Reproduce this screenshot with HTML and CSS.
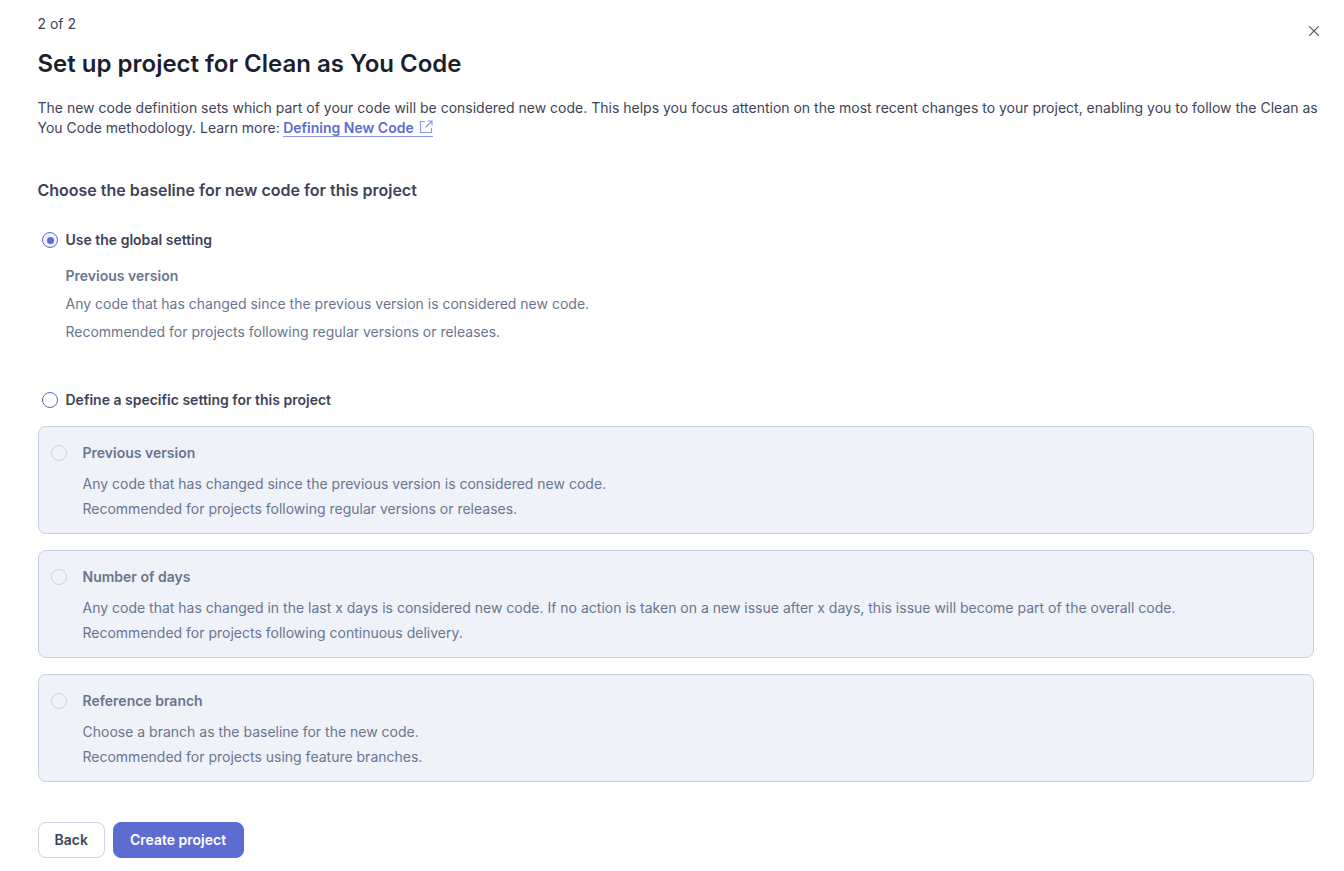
FILE: index.html
```html
<!DOCTYPE html>
<html lang="en">
<head>
<meta charset="utf-8">
<title>Set up project</title>
<link rel="stylesheet" href="styles.css">
</head>
<body>
<div class="page">
  <div class="top">
    <div class="step">2 of 2</div>
    <button class="close" aria-label="Close">
      <svg width="16" height="16" viewBox="0 0 16 16"><path d="M3.3 3.3 12.7 12.7M12.7 3.3 3.3 12.7" stroke="#4e5266" stroke-width="1.2" fill="none"/></svg>
    </button>
  </div>
  <h1 class="title">Set up project for Clean as You Code</h1>
  <p class="intro">The new code definition sets which part of your code will be considered new code. This helps you focus attention on the most recent changes to your project, enabling you to follow the Clean as You Code methodology. Learn more: <a class="link" href="#">Defining New Code<svg class="ext" width="14" height="14" viewBox="0 0 14 14"><path d="M6 1.5H1.5V12.5H12.5V8M8.5 1H13V5.5M13 1 6.5 7.5" stroke="#8d9be8" stroke-width="1.2" fill="none"/></svg></a></p>
  <h2 class="subtitle">Choose the baseline for new code for this project</h2>

  <div class="option-row first"><span class="radio checked"></span><span class="option-label">Use the global setting</span></div>
  <div class="global">
    <div class="global-title">Previous version</div>
    <div class="global-line">Any code that has changed since the previous version is considered new code.</div>
    <div class="global-line">Recommended for projects following regular versions or releases.</div>
  </div>

  <div class="option-row second"><span class="radio"></span><span class="option-label">Define a specific setting for this project</span></div>

  <div class="cards">
    <div class="card">
      <div class="card-head"><span class="radio disabled"></span><span class="card-title">Previous version</span></div>
      <div class="card-line">Any code that has changed since the previous version is considered new code.</div>
      <div class="card-line">Recommended for projects following regular versions or releases.</div>
    </div>
    <div class="card">
      <div class="card-head"><span class="radio disabled"></span><span class="card-title">Number of days</span></div>
      <div class="card-line">Any code that has changed in the last x days is considered new code. If no action is taken on a new issue after x days, this issue will become part of the overall code.</div>
      <div class="card-line">Recommended for projects following continuous delivery.</div>
    </div>
    <div class="card">
      <div class="card-head"><span class="radio disabled"></span><span class="card-title">Reference branch</span></div>
      <div class="card-line">Choose a branch as the baseline for the new code.</div>
      <div class="card-line">Recommended for projects using feature branches.</div>
    </div>
  </div>

  <div class="actions">
    <button class="btn btn-back">Back</button>
    <button class="btn btn-primary">Create project</button>
  </div>
</div>
</body>
</html>
```
FILE: styles.css
```css
* { box-sizing: border-box; }
html, body { margin: 0; padding: 0; background: #fff; }
body { font-family: Inter, "Liberation Sans", sans-serif; font-size: 14px; line-height: 20px; color: #3e4357; }
.page { width: 1344px; height: 871px; padding: 14px 30px 0 38px; overflow: hidden; }
.top { display: flex; justify-content: space-between; align-items: flex-start; height: 20px; }
.step { font-size: 14px; line-height: 20px; color: #3e4357; margin-left: -0.5px; }
.close { border: 0; background: none; padding: 0; width: 16px; height: 16px; margin: 9px -8px 0 0; display: flex; }
.title { margin: 15px 0 0 -0.5px; font-size: 24px; line-height: 30px; font-weight: 600; color: #1c1f2e; }
.intro { margin: 19px 0 0 -0.5px; font-size: 14px; line-height: 20px; color: #3e4357; width: 1282px; }
.link { color: #5d6cd0; font-weight: 600; text-decoration: none; border-bottom: 1px solid #8d9be8; margin-left: -0.5px; }
.ext { margin-left: 5px; vertical-align: -1px; }
.subtitle { margin: 40px 0 0 -0.5px; font-size: 16px; line-height: 24px; font-weight: 600; color: #3e4357; }
.option-row { display: flex; align-items: center; padding-left: 4px; height: 20px; }
.option-row.first { margin-top: 28px; }
.option-row.second { margin-top: 48px; }
.radio { width: 16px; height: 16px; border-radius: 50%; border: 1px solid #5d6cd0; background: #fff; flex: none; display: flex; align-items: center; justify-content: center; }
.radio.checked { background: #eef0fb; }
.radio.checked::after { content: ""; width: 7px; height: 7px; border-radius: 50%; background: #5d6cd0; }
.radio.disabled { background: #eff2f9; border-color: #ced2e6; }
.option-label { margin-left: 7.5px; font-weight: 600; color: #3e4357; }
.global { padding-left: 27.5px; margin-top: 16px; color: #6a7590; }
.global-title { font-weight: 600; line-height: 20px; }
.global-line { margin-top: 8px; line-height: 20px; }
.cards { display: flex; flex-direction: column; gap: 16px; margin-top: 16px; width: 1276px; }
.card { height: 108px; background: #eff2f9; border: 1px solid #c5cddf; border-radius: 8px; padding: 16px 12px; color: #6a7590; }
.card-head { display: flex; align-items: center; height: 20px; margin-bottom: 8px; }
.card-title { margin-left: 15.5px; font-weight: 600; }
.card-line { padding-left: 31.5px; line-height: 25px; }
.actions { display: flex; gap: 8px; margin-top: 40px; }
.btn { height: 36px; font-family: inherit; font-size: 14px; font-weight: 600; border-radius: 8px; padding: 0 16.5px 2px 15.5px; }
.btn-back { background: #fff; border: 1px solid #ced2e6; color: #3e4357; }
.btn-primary { background: #5d6cd0; border: 1px solid #5d6cd0; color: #fff; }
```
